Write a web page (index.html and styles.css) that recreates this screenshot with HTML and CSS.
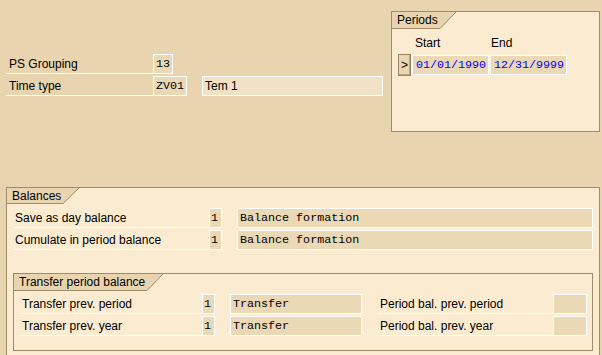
FILE: index.html
```html
<!DOCTYPE html>
<html lang="en">
<head>
  <meta charset="UTF-8" />
  <title>Time type</title>
  <link rel="stylesheet" href="styles.css">
</head>
<body>
  <div class="top">
    <div class="key-fields">
      <div class="row">
        <div class="label label-top">PS Grouping</div>
        <div class="field field-num2">13</div>
      </div>
      <div class="row">
        <div class="label label-top">Time type</div>
        <div class="field field-code">ZV01</div>
        <div class="field field-text">Tem 1</div>
      </div>
    </div>

    <div class="group periods">
      <div class="tab">
        <span class="tab-text">Periods</span>
        <svg class="tab-corner" width="16" height="17" viewBox="0 0 16 17">
          <polygon points="0,0 16,0 0,17" fill="#e9d4b0" />
          <line x1="0" y1="16.5" x2="16" y2="0" stroke="#9f8a6a" stroke-width="1" />
        </svg>
      </div>
      <div class="period-head">
        <span class="col-start">Start</span>
        <span>End</span>
      </div>
      <div class="period-row">
        <button class="sel-btn">&gt;</button>
        <div class="field field-date">01/01/1990</div>
        <div class="field field-date">12/31/9999</div>
      </div>
    </div>
  </div>

  <div class="group balances">
    <div class="tab tab-short">
      <span class="tab-text">Balances</span>
      <svg class="tab-corner" width="16" height="16" viewBox="0 0 16 16">
        <polygon points="0,0 16,0 0,16" fill="#e9d4b0" />
        <line x1="0" y1="15.5" x2="16" y2="0" stroke="#9f8a6a" stroke-width="1" />
      </svg>
    </div>

    <div class="rows bal-rows">
      <div class="row">
        <div class="label label-bal">Save as day balance</div>
        <div class="field field-flag">1</div>
        <div class="field field-long">Balance formation</div>
      </div>
      <div class="row">
        <div class="label label-bal">Cumulate in period balance</div>
        <div class="field field-flag">1</div>
        <div class="field field-long">Balance formation</div>
      </div>
    </div>

    <div class="group transfer">
      <div class="tab">
        <span class="tab-text">Transfer period balance</span>
        <svg class="tab-corner" width="16" height="17" viewBox="0 0 16 17">
          <polygon points="0,0 16,0 0,17" fill="#e9d4b0" />
          <line x1="0" y1="16.5" x2="16" y2="0" stroke="#9f8a6a" stroke-width="1" />
        </svg>
      </div>
      <div class="rows tr-rows">
        <div class="row">
          <div class="label label-tr">Transfer prev. period</div>
          <div class="field field-flag">1</div>
          <div class="field field-mid">Transfer</div>
          <div class="label label-pb">Period bal. prev. period</div>
          <div class="field field-small"></div>
        </div>
        <div class="row">
          <div class="label label-tr">Transfer prev. year</div>
          <div class="field field-flag">1</div>
          <div class="field field-mid">Transfer</div>
          <div class="label label-pb">Period bal. prev. year</div>
          <div class="field field-small"></div>
        </div>
      </div>
    </div>
  </div>
</body>
</html>
```

FILE: styles.css
```css
* { box-sizing: border-box; }

body {
  margin: 0;
  width: 602px;
  height: 355px;
  overflow: hidden;
  background: #e9d4b0;
  font-family: "Liberation Sans", Arial, sans-serif;
  font-size: 12px;
  color: #000;
}

.top {
  display: flex;
  height: 187px;
  padding-left: 6px;
}

.key-fields {
  width: 377px;
  padding-top: 54px;
}

.row {
  display: flex;
  height: 20px;
  margin-bottom: 2px;
}

.label {
  height: 20px;
  line-height: 20px;
  padding-left: 2px;
  border-bottom: 1px solid #fff;
  white-space: nowrap;
}

.label-top { width: 147px; padding-left: 3px; }
.label-bal { width: 196px; }
.label-tr { width: 182px; }
.label-pb { width: 175px; margin-left: 16px; }

.field {
  height: 20px;
  line-height: 18px;
  border: 1px solid #fff;
  background: #ebd8b5;
  font-family: "Liberation Mono", "Courier New", monospace;
  font-size: 11.7px;
  padding-left: 2px;
  white-space: nowrap;
}

.field-num2 { width: 20px; }
.field-code { width: 34px; }
.field-text {
  width: 181px;
  margin-left: 15px;
  background: #f2e2c5;
  font-family: "Liberation Sans", Arial, sans-serif;
  font-size: 12px;
}
.field-flag { width: 13px; padding-left: 1px; }
.field-long { width: 356px; margin-left: 15px; }
.field-mid { width: 132px; margin-left: 15px; }
.field-small { width: 34px; }
.field-date {
  width: 77px;
  margin-top: 1px;
  margin-left: 1px;
  color: #0000ff;
  padding-left: 3px;
}

/* group boxes */
.group {
  border: 1px solid #9f8a6a;
  background: #fbebd0;
}

.tab {
  display: flex;
  height: 17px;
}
.tab-short { height: 16px; }

.tab-text {
  background: #e9d4b0;
  border-bottom: 1px solid #9f8a6a;
  padding: 0 2px 0 5px;
  line-height: 16px;
  white-space: nowrap;
}

.tab-corner { display: block; }

.periods {
  width: 209px;
  height: 121px;
  margin-top: 11px;
  margin-left: 8px;
}

.period-head {
  display: flex;
  height: 16px;
  margin-top: 6px;
  padding-left: 23px;
  line-height: 16px;
}
.col-start { width: 76px; }

.period-row {
  display: flex;
  margin-top: 3px;
  padding-left: 6px;
}

.sel-btn {
  width: 13px;
  height: 22px;
  padding: 0;
  margin: 0;
  background: #ead6b2;
  border: 1px solid #8f7a5a;
  border-top-color: #f6ead6;
  border-left-color: #f6ead6;
  box-shadow: inset -1px -1px 0 #b9a47f;
  outline: 1px solid #9a8565;
  outline-offset: -1px;
  font-family: "Liberation Sans", Arial, sans-serif;
  font-size: 12px;
  line-height: 18px;
  color: #000;
}

.balances {
  width: 594px;
  height: 168px;
  margin-left: 6px;
  border-bottom: none;
}

.rows { padding-left: 6px; }
.bal-rows { margin-top: 4px; }

.transfer {
  width: 580px;
  height: 78px;
  margin-top: 23px;
  margin-left: 6px;
}

.tr-rows { margin-top: 3px; }
```
